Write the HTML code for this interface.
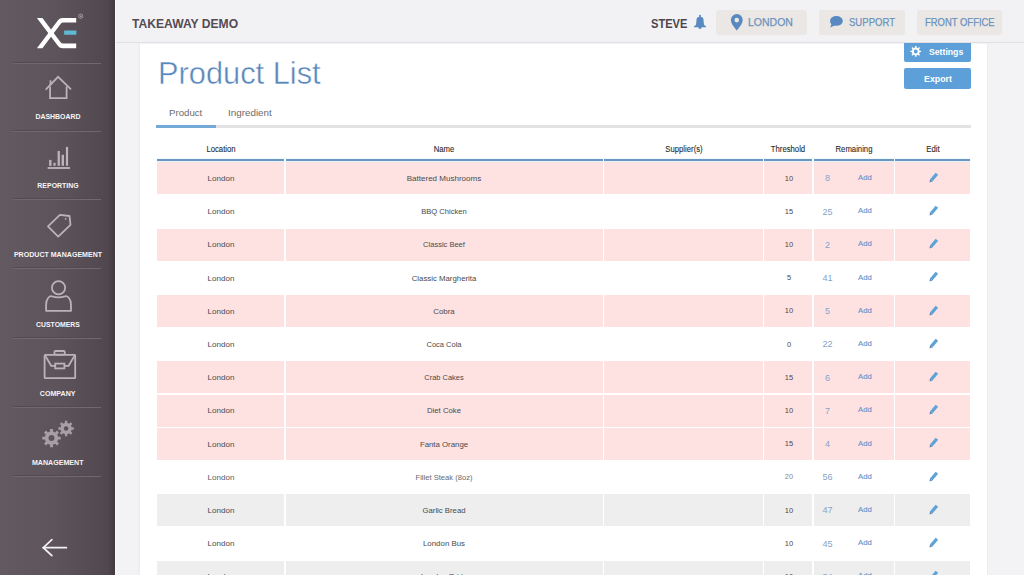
<!DOCTYPE html>
<html><head><meta charset="utf-8">
<style>
*{box-sizing:border-box;margin:0;padding:0}
html,body{width:1024px;height:575px;overflow:hidden;background:#f3f3f5;font-family:"Liberation Sans",sans-serif}
.abs{position:absolute}
.tx{position:absolute;white-space:nowrap;line-height:1}
#side{position:absolute;left:0;top:0;width:115px;height:575px;background:linear-gradient(to right,#635961 0%,#5d535b 50%,#51474e 94%,#42393f 100%)}
#sideedge{position:absolute;left:115px;top:0;width:1.3px;height:575px;background:#fbf9fb}
.sep{position:absolute;left:13px;width:88px;height:1px;background:#736871;box-shadow:0 -1px 0 #54494f}
.hbtn{position:absolute;top:9.5px;height:25px;background:#eae7e4;border-radius:3px}
#card{position:absolute;left:140px;top:43.5px;width:847.2px;height:540px;background:#fff}
.btn{position:absolute;left:904px;width:67px;background:#5c9fd9;border-radius:2px}
.cell{position:absolute}
</style></head><body>

<div id="side">
<svg class="abs" style="left:0;top:0" width="115" height="60" viewBox="0 0 115 60">
<path fill="#fff" d="M36.9,17.9 L42.4,17.9 L60.6,42.2 Q61.6,43.6 63.4,43.6 L76.2,43.6 L76.2,48.2 L62.5,48.2 Q59.6,48.2 58.2,46.2 Z"/>
<path fill="#fff" d="M36.9,48.2 L42.4,48.2 L60.6,23.9 Q61.6,22.5 63.4,22.5 L76.2,22.5 L76.2,17.9 L62.5,17.9 Q59.6,17.9 58.2,19.9 Z"/>
<rect x="64.1" y="30.6" width="12.3" height="4.1" rx="0.6" fill="#5fb9d4"/>
<circle cx="80.7" cy="16.2" r="2.1" fill="none" stroke="#bdb5bc" stroke-width="0.7"/>
<circle cx="80.7" cy="16.2" r="0.8" fill="#bdb5bc"/>
</svg>
<div class="sep" style="top:63px"></div>
<div class="sep" style="top:130.5px"></div>
<div class="sep" style="top:199px"></div>
<div class="sep" style="top:268px"></div>
<div class="sep" style="top:338px"></div>
<div class="sep" style="top:407px"></div>
<div class="sep" style="top:476px"></div>
<div class="tx" style="left:57.50px;top:113.89px;font-size:7.1px;font-weight:bold;color:#f6f4f6;transform:translateX(-50%) scaleX(0.98);">DASHBOARD</div>
<div class="tx" style="left:57.50px;top:182.99px;font-size:7.1px;font-weight:bold;color:#f6f4f6;transform:translateX(-50%) scaleX(0.98);">REPORTING</div>
<div class="tx" style="left:57.50px;top:252.19px;font-size:7.1px;font-weight:bold;color:#f6f4f6;transform:translateX(-50%) scaleX(0.995);">PRODUCT MANAGEMENT</div>
<div class="tx" style="left:57.60px;top:322.09px;font-size:7.1px;font-weight:bold;color:#f6f4f6;transform:translateX(-50%) scaleX(0.97);">CUSTOMERS</div>
<div class="tx" style="left:57.70px;top:391.09px;font-size:7.1px;font-weight:bold;color:#f6f4f6;transform:translateX(-50%) scaleX(1.0);">COMPANY</div>
<div class="tx" style="left:57.75px;top:460.09px;font-size:7.1px;font-weight:bold;color:#f6f4f6;transform:translateX(-50%) scaleX(1.0);">MANAGEMENT</div>
<svg class="abs" style="left:0;top:0" width="115" height="575" viewBox="0 0 115 575" fill="none" stroke="#bbb2ba" stroke-width="1.8">
<polyline points="46.2,89.2 58.05,76.8 70.5,88.9" stroke-linecap="round"/>
<polyline points="50.05,86.5 50.05,98.2 66.6,98.2 66.6,86.5"/>
<line x1="50.5" y1="80.3" x2="50.5" y2="85"/>
<line x1="47.7" y1="168" x2="70" y2="168" stroke-width="1.9"/>
<g fill="#bbb2ba" stroke="none">
<rect x="49.1" y="159.9" width="2.4" height="6"/>
<rect x="53.4" y="162.8" width="2.2" height="3"/>
<rect x="57.6" y="151" width="2.3" height="14.8"/>
<rect x="61.6" y="154.8" width="2.4" height="11"/>
<rect x="65.9" y="146.9" width="2.2" height="18.9"/>
</g>
<polygon points="48,226.4 59.9,214.8 69.5,216 70.5,224.8 58.2,236.6" stroke-width="1.8" stroke-linejoin="round"/>
<circle cx="65.6" cy="218.8" r="0.9" fill="#bbb2ba" stroke="none"/>
<circle cx="58.55" cy="287.8" r="6.6" stroke-width="1.8"/>
<path d="M46.1,310.8 L46.1,305 C46.1,298 50,295.5 52,296.3 C55.5,297.5 61.5,297.5 65,296.3 C67,295.5 71,298 71,305 L71,310.8 Z" stroke-width="1.8" stroke-linejoin="round"/>
<rect x="54.4" y="351" width="10.4" height="3.6" rx="1.2"/>
<rect x="44.6" y="354.8" width="30.6" height="23.3" rx="0.6"/>
<polyline points="45.2,355.6 51.2,365.8 55.2,365.8"/>
<polyline points="74.6,355.6 68.6,365.8 64.4,365.8"/>
<rect x="55.2" y="363.6" width="9.2" height="4.8"/>
</svg>
<svg class="abs" style="left:0;top:0" width="115" height="575" viewBox="0 0 115 575">
<path d="M57.69,435.54 L58.05,436.69 L60.69,436.65 L60.69,439.55 L58.05,439.51 L57.69,440.66 L57.13,441.73 L59.02,443.57 L56.97,445.62 L55.13,443.73 L54.06,444.29 L52.91,444.65 L52.95,447.29 L50.05,447.29 L50.09,444.65 L48.94,444.29 L47.87,443.73 L46.03,445.62 L43.98,443.57 L45.87,441.73 L45.31,440.66 L44.95,439.51 L42.31,439.55 L42.31,436.65 L44.95,436.69 L45.31,435.54 L45.87,434.47 L43.98,432.63 L46.03,430.58 L47.87,432.47 L48.94,431.91 L50.09,431.55 L50.05,428.91 L52.95,428.91 L52.91,431.55 L54.06,431.91 L55.13,432.47 L56.97,430.58 L59.02,432.63 L57.13,434.47 Z M54.50,438.10 A3.0,3.0 0 1,0 48.50,438.10 A3.0,3.0 0 1,0 54.50,438.10 Z" fill="#a89fa6" fill-rule="evenodd"/>
<path d="M71.27,426.36 L71.57,427.32 L73.80,427.28 L73.80,429.72 L71.57,429.68 L71.27,430.64 L70.80,431.54 L72.41,433.08 L70.68,434.81 L69.14,433.20 L68.24,433.67 L67.28,433.97 L67.32,436.20 L64.88,436.20 L64.92,433.97 L63.96,433.67 L63.06,433.20 L61.52,434.81 L59.79,433.08 L61.40,431.54 L60.93,430.64 L60.63,429.68 L58.40,429.72 L58.40,427.28 L60.63,427.32 L60.93,426.36 L61.40,425.46 L59.79,423.92 L61.52,422.19 L63.06,423.80 L63.96,423.33 L64.92,423.03 L64.88,420.80 L67.32,420.80 L67.28,423.03 L68.24,423.33 L69.14,423.80 L70.68,422.19 L72.41,423.92 L70.80,425.46 Z M68.40,428.50 A2.3,2.3 0 1,0 63.80,428.50 A2.3,2.3 0 1,0 68.40,428.50 Z" fill="#a89fa6" fill-rule="evenodd"/>
</svg>
<svg class="abs" style="left:0;top:0" width="115" height="575" viewBox="0 0 115 575" fill="none" stroke="#f4f2f4" stroke-width="1.7" stroke-linecap="round">
<line x1="43.3" y1="547.7" x2="66.4" y2="547.7"/>
<polyline points="51.9,539.6 43.3,547.7 51.9,555.6"/>
</svg>
</div>
<div id="sideedge"></div>
<div id="card"></div>
<div class="abs" style="left:137px;top:43px;width:3px;height:532px;background:linear-gradient(to right,#f3f3f5,#ececef)"></div>
<div class="abs" style="left:987px;top:43px;width:1.2px;height:532px;background:#ececef"></div>
<div class="btn" style="top:40px;height:21.6px"></div>
<div class="btn" style="top:67.7px;height:20.9px"></div>
<svg class="abs" style="left:0;top:0" width="1024" height="100" viewBox="0 0 1024 100"><path d="M919.35,49.91 L919.58,50.67 L921.10,50.68 L921.10,52.12 L919.58,52.13 L919.35,52.89 L918.98,53.59 L920.04,54.68 L919.03,55.69 L917.94,54.63 L917.24,55.00 L916.48,55.23 L916.47,56.75 L915.03,56.75 L915.02,55.23 L914.26,55.00 L913.56,54.63 L912.47,55.69 L911.46,54.68 L912.52,53.59 L912.15,52.89 L911.92,52.13 L910.40,52.12 L910.40,50.68 L911.92,50.67 L912.15,49.91 L912.52,49.21 L911.46,48.12 L912.47,47.11 L913.56,48.17 L914.26,47.80 L915.02,47.57 L915.03,46.05 L916.47,46.05 L916.48,47.57 L917.24,47.80 L917.94,48.17 L919.03,47.11 L920.04,48.12 L918.98,49.21 Z M917.75,51.40 A2.0,2.0 0 1,0 913.75,51.40 A2.0,2.0 0 1,0 917.75,51.40 Z" fill="#fff" fill-rule="evenodd"/></svg>
<div class="tx" style="left:928.60px;top:48.76px;font-size:8.2px;font-weight:bold;color:#fff;transform-origin:0 0;transform:scaleX(1.06);">Settings</div>
<div class="tx" style="left:924.00px;top:76.06px;font-size:8.2px;font-weight:bold;color:#fff;transform-origin:0 0;transform:scaleX(1.08);">Export</div>
<div class="abs" style="left:116.3px;top:0;width:908px;height:42px;background:#f2f2f4"></div>
<div class="abs" style="left:116.3px;top:42px;width:908px;height:1px;background:#e0dfe3"></div>
<div class="tx" style="left:132.30px;top:17.67px;font-size:12.2px;font-weight:bold;color:#554b53;transform-origin:0 0;transform:scaleX(0.994);">TAKEAWAY DEMO</div>
<div class="tx" style="left:650.80px;top:18.04px;font-size:12px;font-weight:bold;color:#4d454b;transform-origin:0 0;transform:scaleX(0.925);">STEVE</div>
<div class="hbtn" style="left:716px;width:91.3px"></div>
<div class="hbtn" style="left:818.8px;width:86.3px"></div>
<div class="hbtn" style="left:916.6px;width:85.7px"></div>
<div class="tx" style="left:747.70px;top:16.88px;font-size:11.25px;font-weight:normal;color:#6a93bd;transform-origin:0 0;transform:scaleX(0.934);-webkit-text-stroke:0.25px #6a93bd">LONDON</div>
<div class="tx" style="left:848.60px;top:16.65px;font-size:11.4px;font-weight:normal;color:#6a93bd;transform-origin:0 0;transform:scaleX(0.839);-webkit-text-stroke:0.25px #6a93bd">SUPPORT</div>
<div class="tx" style="left:924.90px;top:16.65px;font-size:11.4px;font-weight:normal;color:#6a93bd;transform-origin:0 0;transform:scaleX(0.83);-webkit-text-stroke:0.25px #6a93bd">FRONT OFFICE</div>
<svg class="abs" style="left:0;top:0" width="1024" height="60" viewBox="0 0 1024 60">
<rect x="699.1" y="14.8" width="1.8" height="2.6" rx="0.8" fill="#5889c0"/>
<path d="M696.6,18.8 Q697,16.8 700,16.8 Q703,16.8 703.4,18.8 L703.9,24.3 Q704.4,25.6 706,26.3 L706,27.3 L694,27.3 L694,26.3 Q695.6,25.6 696.1,24.3 Z" fill="#5889c0"/>
<ellipse cx="700" cy="27.8" rx="1.7" ry="1.1" fill="#5889c0"/>
<path d="M736.8,30.6 C734,26.6 730.9,23.6 730.9,20 A5.9,5.9 0 1,1 742.7,20 C742.7,23.6 739.6,26.6 736.8,30.6 Z" fill="#5889c0"/>
<circle cx="736.8" cy="20.1" r="2.3" fill="#eceae8"/>
<ellipse cx="836.4" cy="20.9" rx="6.4" ry="4.95" fill="#5889c0"/>
<path d="M831.6,23.4 L830.3,27.4 L835,25.3 Z" fill="#5889c0"/>
</svg>
<div class="tx" style="left:158.00px;top:57.95px;font-size:31.6px;font-weight:normal;color:#5887bb;transform-origin:0 0;transform:scaleX(0.975);-webkit-text-stroke:0.45px #fff;paint-order:fill stroke">Product List</div>
<div class="tx" style="left:168.90px;top:107.84px;font-size:9.4px;font-weight:normal;color:#6b6b6b;transform-origin:0 0;transform:scaleX(1.03);">Product</div>
<div class="tx" style="left:227.90px;top:107.84px;font-size:9.4px;font-weight:normal;color:#6b6b6b;transform-origin:0 0;transform:scaleX(1.05);">Ingredient</div>
<div class="abs" style="left:156.7px;top:125.3px;width:814.3px;height:2.3px;background:#e3e3e3"></div>
<div class="abs" style="left:156.4px;top:125.2px;width:59.3px;height:2.5px;background:#74a8d6"></div>
<div class="abs" style="left:157.3px;top:158px;width:812.7px;height:1px;background:#eef8fe"></div>
<div class="abs" style="left:157.3px;top:161px;width:812.7px;height:1.2px;background:#e2f2fb"></div>
<div class="tx" style="left:220.75px;top:145.17px;font-size:8.3px;font-weight:normal;color:#2a2a2a;transform:translateX(-50%) scaleX(0.93);-webkit-text-stroke:0.1px #2a2a2a">Location</div>
<div class="abs" style="left:157.3px;top:158.9px;width:126.90px;height:2.1px;background:#6b96bf"></div>
<div class="tx" style="left:444.30px;top:145.17px;font-size:8.3px;font-weight:normal;color:#2a2a2a;transform:translateX(-50%) scaleX(0.93);-webkit-text-stroke:0.1px #2a2a2a">Name</div>
<div class="abs" style="left:285.8px;top:158.9px;width:317.00px;height:2.1px;background:#6b96bf"></div>
<div class="tx" style="left:683.60px;top:145.17px;font-size:8.3px;font-weight:normal;color:#2a2a2a;transform:translateX(-50%) scaleX(0.93);-webkit-text-stroke:0.1px #2a2a2a">Supplier(s)</div>
<div class="abs" style="left:604.1px;top:158.9px;width:159.00px;height:2.1px;background:#6b96bf"></div>
<div class="tx" style="left:788.20px;top:145.17px;font-size:8.3px;font-weight:normal;color:#2a2a2a;transform:translateX(-50%) scaleX(0.93);-webkit-text-stroke:0.1px #2a2a2a">Threshold</div>
<div class="abs" style="left:764.4px;top:158.9px;width:47.60px;height:2.1px;background:#6b96bf"></div>
<div class="tx" style="left:853.75px;top:145.17px;font-size:8.3px;font-weight:normal;color:#2a2a2a;transform:translateX(-50%) scaleX(0.93);-webkit-text-stroke:0.1px #2a2a2a">Remaining</div>
<div class="abs" style="left:813.5px;top:158.9px;width:80.50px;height:2.1px;background:#6b96bf"></div>
<div class="tx" style="left:932.65px;top:145.17px;font-size:8.3px;font-weight:normal;color:#2a2a2a;transform:translateX(-50%) scaleX(0.93);-webkit-text-stroke:0.1px #2a2a2a">Edit</div>
<div class="abs" style="left:895.3px;top:158.9px;width:74.70px;height:2.1px;background:#6b96bf"></div>
<div class="cell" style="left:157.3px;top:162.20px;width:126.90px;height:32.0px;background:#fee2e2"></div>
<div class="cell" style="left:285.8px;top:162.20px;width:317.00px;height:32.0px;background:#fee2e2"></div>
<div class="cell" style="left:604.1px;top:162.20px;width:159.00px;height:32.0px;background:#fee2e2"></div>
<div class="cell" style="left:764.4px;top:162.20px;width:47.60px;height:32.0px;background:#fee2e2"></div>
<div class="cell" style="left:813.5px;top:162.20px;width:80.50px;height:32.0px;background:#fee2e2"></div>
<div class="cell" style="left:895.3px;top:162.20px;width:74.70px;height:32.0px;background:#fee2e2"></div>
<div class="tx" style="left:221.00px;top:174.92px;font-size:7.3px;font-weight:normal;color:#4a4a4a;transform:translateX(-50%) scaleX(1.1);">London</div>
<div class="tx" style="left:444.30px;top:174.92px;font-size:7.3px;font-weight:normal;color:#4a4a4a;transform:translateX(-50%) scaleX(1.1);">Battered Mushrooms</div>
<div class="tx" style="left:788.70px;top:174.61px;font-size:7.9px;font-weight:normal;color:#4a4a4a;transform:translateX(-50%) scaleX(0.95);">10</div>
<div class="tx" style="left:827.40px;top:174.38px;font-size:9.0px;font-weight:normal;color:#86a2c8;transform:translateX(-50%) scaleX(1.0);">8</div>
<div class="tx" style="left:864.90px;top:174.08px;font-size:7.7px;font-weight:normal;color:#6b93c8;transform:translateX(-50%) scaleX(1.0);-webkit-text-stroke:0.15px #6b93c8">Add</div>
<svg class="abs" style="left:923px;top:167.80px" width="20" height="20" viewBox="0 0 20 20"><g transform="translate(10.3,10) rotate(-50)"><rect x="-3.3" y="-1.65" width="8.9" height="3.3" fill="#5ca3d8"/><polygon points="-3.3,-1.65 -5.8,0 -3.3,1.65" fill="#6a86a6"/></g></svg>
<div class="tx" style="left:221.00px;top:208.12px;font-size:7.3px;font-weight:normal;color:#4a4a4a;transform:translateX(-50%) scaleX(1.1);">London</div>
<div class="tx" style="left:444.30px;top:208.12px;font-size:7.3px;font-weight:normal;color:#4a4a4a;transform:translateX(-50%) scaleX(1.04);">BBQ Chicken</div>
<div class="tx" style="left:788.70px;top:207.81px;font-size:7.9px;font-weight:normal;color:#4a4a4a;transform:translateX(-50%) scaleX(0.95);">15</div>
<div class="tx" style="left:827.40px;top:207.58px;font-size:9.0px;font-weight:normal;color:#86a2c8;transform:translateX(-50%) scaleX(1.0);">25</div>
<div class="tx" style="left:864.90px;top:207.28px;font-size:7.7px;font-weight:normal;color:#6b93c8;transform:translateX(-50%) scaleX(1.0);-webkit-text-stroke:0.15px #6b93c8">Add</div>
<svg class="abs" style="left:923px;top:201.00px" width="20" height="20" viewBox="0 0 20 20"><g transform="translate(10.3,10) rotate(-50)"><rect x="-3.3" y="-1.65" width="8.9" height="3.3" fill="#5ca3d8"/><polygon points="-3.3,-1.65 -5.8,0 -3.3,1.65" fill="#6a86a6"/></g></svg>
<div class="cell" style="left:157.3px;top:228.60px;width:126.90px;height:32.0px;background:#fee2e2"></div>
<div class="cell" style="left:285.8px;top:228.60px;width:317.00px;height:32.0px;background:#fee2e2"></div>
<div class="cell" style="left:604.1px;top:228.60px;width:159.00px;height:32.0px;background:#fee2e2"></div>
<div class="cell" style="left:764.4px;top:228.60px;width:47.60px;height:32.0px;background:#fee2e2"></div>
<div class="cell" style="left:813.5px;top:228.60px;width:80.50px;height:32.0px;background:#fee2e2"></div>
<div class="cell" style="left:895.3px;top:228.60px;width:74.70px;height:32.0px;background:#fee2e2"></div>
<div class="tx" style="left:221.00px;top:241.32px;font-size:7.3px;font-weight:normal;color:#4a4a4a;transform:translateX(-50%) scaleX(1.1);">London</div>
<div class="tx" style="left:444.30px;top:241.32px;font-size:7.3px;font-weight:normal;color:#4a4a4a;transform:translateX(-50%) scaleX(1.03);">Classic Beef</div>
<div class="tx" style="left:788.70px;top:241.01px;font-size:7.9px;font-weight:normal;color:#4a4a4a;transform:translateX(-50%) scaleX(0.95);">10</div>
<div class="tx" style="left:827.40px;top:240.78px;font-size:9.0px;font-weight:normal;color:#86a2c8;transform:translateX(-50%) scaleX(1.0);">2</div>
<div class="tx" style="left:864.90px;top:240.48px;font-size:7.7px;font-weight:normal;color:#6b93c8;transform:translateX(-50%) scaleX(1.0);-webkit-text-stroke:0.15px #6b93c8">Add</div>
<svg class="abs" style="left:923px;top:234.20px" width="20" height="20" viewBox="0 0 20 20"><g transform="translate(10.3,10) rotate(-50)"><rect x="-3.3" y="-1.65" width="8.9" height="3.3" fill="#5ca3d8"/><polygon points="-3.3,-1.65 -5.8,0 -3.3,1.65" fill="#6a86a6"/></g></svg>
<div class="tx" style="left:221.00px;top:274.52px;font-size:7.3px;font-weight:normal;color:#4a4a4a;transform:translateX(-50%) scaleX(1.1);">London</div>
<div class="tx" style="left:444.30px;top:274.52px;font-size:7.3px;font-weight:normal;color:#4a4a4a;transform:translateX(-50%) scaleX(1.07);">Classic Margherita</div>
<div class="tx" style="left:788.70px;top:274.21px;font-size:7.9px;font-weight:normal;color:#4a4a4a;transform:translateX(-50%) scaleX(0.95);">5</div>
<div class="tx" style="left:827.40px;top:273.98px;font-size:9.0px;font-weight:normal;color:#86a2c8;transform:translateX(-50%) scaleX(1.0);">41</div>
<div class="tx" style="left:864.90px;top:273.68px;font-size:7.7px;font-weight:normal;color:#6b93c8;transform:translateX(-50%) scaleX(1.0);-webkit-text-stroke:0.15px #6b93c8">Add</div>
<svg class="abs" style="left:923px;top:267.40px" width="20" height="20" viewBox="0 0 20 20"><g transform="translate(10.3,10) rotate(-50)"><rect x="-3.3" y="-1.65" width="8.9" height="3.3" fill="#5ca3d8"/><polygon points="-3.3,-1.65 -5.8,0 -3.3,1.65" fill="#6a86a6"/></g></svg>
<div class="cell" style="left:157.3px;top:295.00px;width:126.90px;height:32.0px;background:#fee2e2"></div>
<div class="cell" style="left:285.8px;top:295.00px;width:317.00px;height:32.0px;background:#fee2e2"></div>
<div class="cell" style="left:604.1px;top:295.00px;width:159.00px;height:32.0px;background:#fee2e2"></div>
<div class="cell" style="left:764.4px;top:295.00px;width:47.60px;height:32.0px;background:#fee2e2"></div>
<div class="cell" style="left:813.5px;top:295.00px;width:80.50px;height:32.0px;background:#fee2e2"></div>
<div class="cell" style="left:895.3px;top:295.00px;width:74.70px;height:32.0px;background:#fee2e2"></div>
<div class="tx" style="left:221.00px;top:307.72px;font-size:7.3px;font-weight:normal;color:#4a4a4a;transform:translateX(-50%) scaleX(1.1);">London</div>
<div class="tx" style="left:444.30px;top:307.72px;font-size:7.3px;font-weight:normal;color:#4a4a4a;transform:translateX(-50%) scaleX(1.08);">Cobra</div>
<div class="tx" style="left:788.70px;top:307.41px;font-size:7.9px;font-weight:normal;color:#4a4a4a;transform:translateX(-50%) scaleX(0.95);">10</div>
<div class="tx" style="left:827.40px;top:307.18px;font-size:9.0px;font-weight:normal;color:#86a2c8;transform:translateX(-50%) scaleX(1.0);">5</div>
<div class="tx" style="left:864.90px;top:306.88px;font-size:7.7px;font-weight:normal;color:#6b93c8;transform:translateX(-50%) scaleX(1.0);-webkit-text-stroke:0.15px #6b93c8">Add</div>
<svg class="abs" style="left:923px;top:300.60px" width="20" height="20" viewBox="0 0 20 20"><g transform="translate(10.3,10) rotate(-50)"><rect x="-3.3" y="-1.65" width="8.9" height="3.3" fill="#5ca3d8"/><polygon points="-3.3,-1.65 -5.8,0 -3.3,1.65" fill="#6a86a6"/></g></svg>
<div class="tx" style="left:221.00px;top:340.92px;font-size:7.3px;font-weight:normal;color:#4a4a4a;transform:translateX(-50%) scaleX(1.1);">London</div>
<div class="tx" style="left:444.30px;top:340.92px;font-size:7.3px;font-weight:normal;color:#4a4a4a;transform:translateX(-50%) scaleX(1.03);">Coca Cola</div>
<div class="tx" style="left:788.70px;top:340.61px;font-size:7.9px;font-weight:normal;color:#4a4a4a;transform:translateX(-50%) scaleX(0.95);">0</div>
<div class="tx" style="left:827.40px;top:340.38px;font-size:9.0px;font-weight:normal;color:#86a2c8;transform:translateX(-50%) scaleX(1.0);">22</div>
<div class="tx" style="left:864.90px;top:340.08px;font-size:7.7px;font-weight:normal;color:#6b93c8;transform:translateX(-50%) scaleX(1.0);-webkit-text-stroke:0.15px #6b93c8">Add</div>
<svg class="abs" style="left:923px;top:333.80px" width="20" height="20" viewBox="0 0 20 20"><g transform="translate(10.3,10) rotate(-50)"><rect x="-3.3" y="-1.65" width="8.9" height="3.3" fill="#5ca3d8"/><polygon points="-3.3,-1.65 -5.8,0 -3.3,1.65" fill="#6a86a6"/></g></svg>
<div class="cell" style="left:157.3px;top:361.40px;width:126.90px;height:32.0px;background:#fee2e2"></div>
<div class="cell" style="left:285.8px;top:361.40px;width:317.00px;height:32.0px;background:#fee2e2"></div>
<div class="cell" style="left:604.1px;top:361.40px;width:159.00px;height:32.0px;background:#fee2e2"></div>
<div class="cell" style="left:764.4px;top:361.40px;width:47.60px;height:32.0px;background:#fee2e2"></div>
<div class="cell" style="left:813.5px;top:361.40px;width:80.50px;height:32.0px;background:#fee2e2"></div>
<div class="cell" style="left:895.3px;top:361.40px;width:74.70px;height:32.0px;background:#fee2e2"></div>
<div class="tx" style="left:221.00px;top:374.12px;font-size:7.3px;font-weight:normal;color:#4a4a4a;transform:translateX(-50%) scaleX(1.1);">London</div>
<div class="tx" style="left:444.30px;top:374.12px;font-size:7.3px;font-weight:normal;color:#4a4a4a;transform:translateX(-50%) scaleX(1.02);">Crab Cakes</div>
<div class="tx" style="left:788.70px;top:373.81px;font-size:7.9px;font-weight:normal;color:#4a4a4a;transform:translateX(-50%) scaleX(0.95);">15</div>
<div class="tx" style="left:827.40px;top:373.58px;font-size:9.0px;font-weight:normal;color:#86a2c8;transform:translateX(-50%) scaleX(1.0);">6</div>
<div class="tx" style="left:864.90px;top:373.28px;font-size:7.7px;font-weight:normal;color:#6b93c8;transform:translateX(-50%) scaleX(1.0);-webkit-text-stroke:0.15px #6b93c8">Add</div>
<svg class="abs" style="left:923px;top:367.00px" width="20" height="20" viewBox="0 0 20 20"><g transform="translate(10.3,10) rotate(-50)"><rect x="-3.3" y="-1.65" width="8.9" height="3.3" fill="#5ca3d8"/><polygon points="-3.3,-1.65 -5.8,0 -3.3,1.65" fill="#6a86a6"/></g></svg>
<div class="cell" style="left:157.3px;top:394.60px;width:126.90px;height:32.0px;background:#fee2e2"></div>
<div class="cell" style="left:285.8px;top:394.60px;width:317.00px;height:32.0px;background:#fee2e2"></div>
<div class="cell" style="left:604.1px;top:394.60px;width:159.00px;height:32.0px;background:#fee2e2"></div>
<div class="cell" style="left:764.4px;top:394.60px;width:47.60px;height:32.0px;background:#fee2e2"></div>
<div class="cell" style="left:813.5px;top:394.60px;width:80.50px;height:32.0px;background:#fee2e2"></div>
<div class="cell" style="left:895.3px;top:394.60px;width:74.70px;height:32.0px;background:#fee2e2"></div>
<div class="tx" style="left:221.00px;top:407.32px;font-size:7.3px;font-weight:normal;color:#4a4a4a;transform:translateX(-50%) scaleX(1.1);">London</div>
<div class="tx" style="left:444.30px;top:407.32px;font-size:7.3px;font-weight:normal;color:#4a4a4a;transform:translateX(-50%) scaleX(1.06);">Diet Coke</div>
<div class="tx" style="left:788.70px;top:407.01px;font-size:7.9px;font-weight:normal;color:#4a4a4a;transform:translateX(-50%) scaleX(0.95);">10</div>
<div class="tx" style="left:827.40px;top:406.78px;font-size:9.0px;font-weight:normal;color:#86a2c8;transform:translateX(-50%) scaleX(1.0);">7</div>
<div class="tx" style="left:864.90px;top:406.48px;font-size:7.7px;font-weight:normal;color:#6b93c8;transform:translateX(-50%) scaleX(1.0);-webkit-text-stroke:0.15px #6b93c8">Add</div>
<svg class="abs" style="left:923px;top:400.20px" width="20" height="20" viewBox="0 0 20 20"><g transform="translate(10.3,10) rotate(-50)"><rect x="-3.3" y="-1.65" width="8.9" height="3.3" fill="#5ca3d8"/><polygon points="-3.3,-1.65 -5.8,0 -3.3,1.65" fill="#6a86a6"/></g></svg>
<div class="cell" style="left:157.3px;top:427.80px;width:126.90px;height:32.0px;background:#fee2e2"></div>
<div class="cell" style="left:285.8px;top:427.80px;width:317.00px;height:32.0px;background:#fee2e2"></div>
<div class="cell" style="left:604.1px;top:427.80px;width:159.00px;height:32.0px;background:#fee2e2"></div>
<div class="cell" style="left:764.4px;top:427.80px;width:47.60px;height:32.0px;background:#fee2e2"></div>
<div class="cell" style="left:813.5px;top:427.80px;width:80.50px;height:32.0px;background:#fee2e2"></div>
<div class="cell" style="left:895.3px;top:427.80px;width:74.70px;height:32.0px;background:#fee2e2"></div>
<div class="tx" style="left:221.00px;top:440.52px;font-size:7.3px;font-weight:normal;color:#4a4a4a;transform:translateX(-50%) scaleX(1.1);">London</div>
<div class="tx" style="left:444.30px;top:440.52px;font-size:7.3px;font-weight:normal;color:#4a4a4a;transform:translateX(-50%) scaleX(1.07);">Fanta Orange</div>
<div class="tx" style="left:788.70px;top:440.21px;font-size:7.9px;font-weight:normal;color:#4a4a4a;transform:translateX(-50%) scaleX(0.95);">15</div>
<div class="tx" style="left:827.40px;top:439.98px;font-size:9.0px;font-weight:normal;color:#86a2c8;transform:translateX(-50%) scaleX(1.0);">4</div>
<div class="tx" style="left:864.90px;top:439.68px;font-size:7.7px;font-weight:normal;color:#6b93c8;transform:translateX(-50%) scaleX(1.0);-webkit-text-stroke:0.15px #6b93c8">Add</div>
<svg class="abs" style="left:923px;top:433.40px" width="20" height="20" viewBox="0 0 20 20"><g transform="translate(10.3,10) rotate(-50)"><rect x="-3.3" y="-1.65" width="8.9" height="3.3" fill="#5ca3d8"/><polygon points="-3.3,-1.65 -5.8,0 -3.3,1.65" fill="#6a86a6"/></g></svg>
<div class="tx" style="left:221.00px;top:473.72px;font-size:7.3px;font-weight:normal;color:#5a5a5a;transform:translateX(-50%) scaleX(1.1);">London</div>
<div class="tx" style="left:444.30px;top:473.72px;font-size:7.3px;font-weight:normal;color:#6a6a6a;transform:translateX(-50%) scaleX(1.04);">Fillet Steak (8oz)</div>
<div class="tx" style="left:788.70px;top:473.41px;font-size:7.9px;font-weight:normal;color:#8a8a8a;transform:translateX(-50%) scaleX(0.95);">20</div>
<div class="tx" style="left:827.40px;top:473.18px;font-size:9.0px;font-weight:normal;color:#86a2c8;transform:translateX(-50%) scaleX(1.0);">56</div>
<div class="tx" style="left:864.90px;top:472.88px;font-size:7.7px;font-weight:normal;color:#6b93c8;transform:translateX(-50%) scaleX(1.0);-webkit-text-stroke:0.15px #6b93c8">Add</div>
<svg class="abs" style="left:923px;top:466.60px" width="20" height="20" viewBox="0 0 20 20"><g transform="translate(10.3,10) rotate(-50)"><rect x="-3.3" y="-1.65" width="8.9" height="3.3" fill="#5ca3d8"/><polygon points="-3.3,-1.65 -5.8,0 -3.3,1.65" fill="#6a86a6"/></g></svg>
<div class="cell" style="left:157.3px;top:494.20px;width:126.90px;height:32.0px;background:#eeeeee"></div>
<div class="cell" style="left:285.8px;top:494.20px;width:317.00px;height:32.0px;background:#eeeeee"></div>
<div class="cell" style="left:604.1px;top:494.20px;width:159.00px;height:32.0px;background:#eeeeee"></div>
<div class="cell" style="left:764.4px;top:494.20px;width:47.60px;height:32.0px;background:#eeeeee"></div>
<div class="cell" style="left:813.5px;top:494.20px;width:80.50px;height:32.0px;background:#eeeeee"></div>
<div class="cell" style="left:895.3px;top:494.20px;width:74.70px;height:32.0px;background:#eeeeee"></div>
<div class="tx" style="left:221.00px;top:506.92px;font-size:7.3px;font-weight:normal;color:#4a4a4a;transform:translateX(-50%) scaleX(1.1);">London</div>
<div class="tx" style="left:444.30px;top:506.92px;font-size:7.3px;font-weight:normal;color:#4a4a4a;transform:translateX(-50%) scaleX(1.06);">Garlic Bread</div>
<div class="tx" style="left:788.70px;top:506.61px;font-size:7.9px;font-weight:normal;color:#4a4a4a;transform:translateX(-50%) scaleX(0.95);">10</div>
<div class="tx" style="left:827.40px;top:506.38px;font-size:9.0px;font-weight:normal;color:#86a2c8;transform:translateX(-50%) scaleX(1.0);">47</div>
<div class="tx" style="left:864.90px;top:506.08px;font-size:7.7px;font-weight:normal;color:#6b93c8;transform:translateX(-50%) scaleX(1.0);-webkit-text-stroke:0.15px #6b93c8">Add</div>
<svg class="abs" style="left:923px;top:499.80px" width="20" height="20" viewBox="0 0 20 20"><g transform="translate(10.3,10) rotate(-50)"><rect x="-3.3" y="-1.65" width="8.9" height="3.3" fill="#5ca3d8"/><polygon points="-3.3,-1.65 -5.8,0 -3.3,1.65" fill="#6a86a6"/></g></svg>
<div class="tx" style="left:221.00px;top:540.12px;font-size:7.3px;font-weight:normal;color:#4a4a4a;transform:translateX(-50%) scaleX(1.1);">London</div>
<div class="tx" style="left:444.30px;top:540.12px;font-size:7.3px;font-weight:normal;color:#4a4a4a;transform:translateX(-50%) scaleX(1.08);">London Bus</div>
<div class="tx" style="left:788.70px;top:539.81px;font-size:7.9px;font-weight:normal;color:#4a4a4a;transform:translateX(-50%) scaleX(0.95);">10</div>
<div class="tx" style="left:827.40px;top:539.58px;font-size:9.0px;font-weight:normal;color:#86a2c8;transform:translateX(-50%) scaleX(1.0);">45</div>
<div class="tx" style="left:864.90px;top:539.28px;font-size:7.7px;font-weight:normal;color:#6b93c8;transform:translateX(-50%) scaleX(1.0);-webkit-text-stroke:0.15px #6b93c8">Add</div>
<svg class="abs" style="left:923px;top:533.00px" width="20" height="20" viewBox="0 0 20 20"><g transform="translate(10.3,10) rotate(-50)"><rect x="-3.3" y="-1.65" width="8.9" height="3.3" fill="#5ca3d8"/><polygon points="-3.3,-1.65 -5.8,0 -3.3,1.65" fill="#6a86a6"/></g></svg>
<div class="cell" style="left:157.3px;top:560.60px;width:126.90px;height:32.0px;background:#eeeeee"></div>
<div class="cell" style="left:285.8px;top:560.60px;width:317.00px;height:32.0px;background:#eeeeee"></div>
<div class="cell" style="left:604.1px;top:560.60px;width:159.00px;height:32.0px;background:#eeeeee"></div>
<div class="cell" style="left:764.4px;top:560.60px;width:47.60px;height:32.0px;background:#eeeeee"></div>
<div class="cell" style="left:813.5px;top:560.60px;width:80.50px;height:32.0px;background:#eeeeee"></div>
<div class="cell" style="left:895.3px;top:560.60px;width:74.70px;height:32.0px;background:#eeeeee"></div>
<div class="tx" style="left:221.00px;top:573.32px;font-size:7.3px;font-weight:normal;color:#4a4a4a;transform:translateX(-50%) scaleX(1.1);">London</div>
<div class="tx" style="left:444.30px;top:573.32px;font-size:7.3px;font-weight:normal;color:#4a4a4a;transform:translateX(-50%) scaleX(1.06);">London Pride</div>
<div class="tx" style="left:788.70px;top:573.01px;font-size:7.9px;font-weight:normal;color:#4a4a4a;transform:translateX(-50%) scaleX(0.95);">10</div>
<div class="tx" style="left:827.40px;top:572.78px;font-size:9.0px;font-weight:normal;color:#86a2c8;transform:translateX(-50%) scaleX(1.0);">34</div>
<div class="tx" style="left:864.90px;top:572.48px;font-size:7.7px;font-weight:normal;color:#6b93c8;transform:translateX(-50%) scaleX(1.0);-webkit-text-stroke:0.15px #6b93c8">Add</div>
<svg class="abs" style="left:923px;top:566.20px" width="20" height="20" viewBox="0 0 20 20"><g transform="translate(10.3,10) rotate(-50)"><rect x="-3.3" y="-1.65" width="8.9" height="3.3" fill="#5ca3d8"/><polygon points="-3.3,-1.65 -5.8,0 -3.3,1.65" fill="#6a86a6"/></g></svg>
</body></html>
